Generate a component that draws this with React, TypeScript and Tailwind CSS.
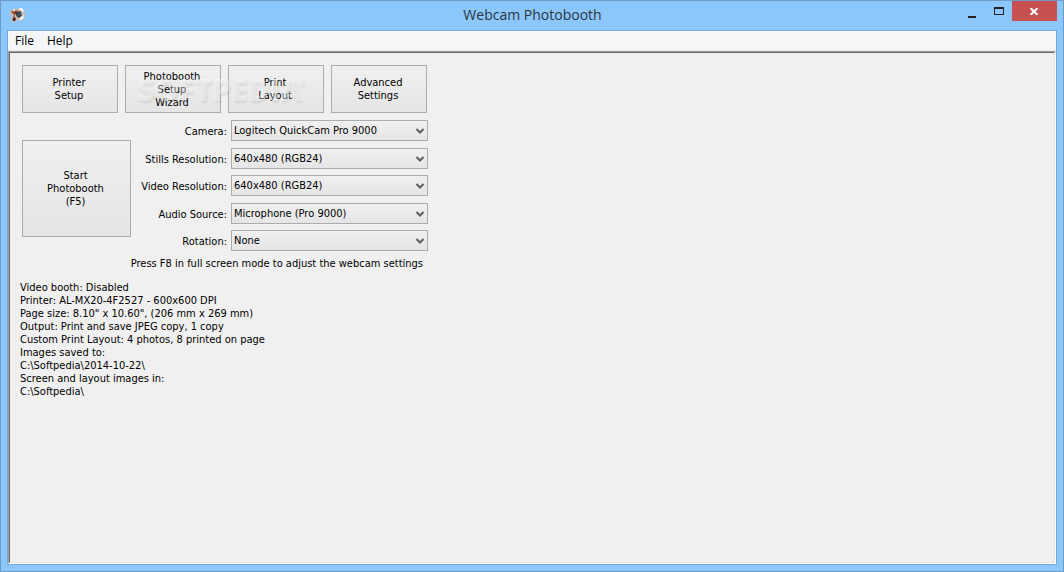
import { useState } from "react";

const TOOL_BUTTONS = [
  { id: "printer", lines: ["Printer", "Setup"] },
  { id: "wizard", lines: ["Photobooth", "Setup", "Wizard"] },
  { id: "layout", lines: ["Print", "Layout"] },
  { id: "advanced", lines: ["Advanced", "Settings"] },
];

const SETTINGS = [
  { id: "camera", label: "Camera:", options: ["Logitech QuickCam Pro 9000"] },
  { id: "stills", label: "Stills Resolution:", options: ["640x480 (RGB24)"] },
  { id: "video", label: "Video Resolution:", options: ["640x480 (RGB24)"] },
  { id: "audio", label: "Audio Source:", options: ["Microphone (Pro 9000)"] },
  { id: "rotation", label: "Rotation:", options: ["None"] },
];

const STATUS = [
  "Video booth: Disabled",
  "Printer: AL-MX20-4F2527 - 600x600 DPI",
  'Page size: 8.10" x 10.60", (206 mm x 269 mm)',
  "Output: Print and save JPEG copy, 1 copy",
  "Custom Print Layout: 4 photos, 8 printed on page",
  "Images saved to:",
  "C:\\Softpedia\\2014-10-22\\",
  "Screen and layout images in:",
  "C:\\Softpedia\\",
];

function AppIcon() {
  return (
    <svg width="16" height="16" viewBox="0 0 16 16" aria-hidden="true">
      <path d="M1 3l3-1 2-1 3 1 2-1 3 2 1 3v3l-1 3-3 2-3 0-2-1-1 2-3 1-1-2 1-3-1-2-2-1z" fill="#c4bfbd" />
      <path d="M1 4l4-1 3 1v2l-3 1v3l1 3-3 1-1-1 2-5-2-2z" fill="#a5583f" />
      <path d="M6 6l3-2 3 1v4l-3 2-3-2z" fill="#454a50" />
      <path d="M9 1h3l2 3-1 1-3-2zM12 9l2-1-1 4-4 1 0-1zM3 3l2-1v2H3z" fill="#f5f3f2" />
      <path d="M3 11h3l-1 3H3zM5 5h2v2H5z" fill="#4b2c24" />
      <path d="M11 5h1v3h-1z" fill="#8f9aa3" />
    </svg>
  );
}

function PushButton({ lines, className }: { lines: string[]; className: string }) {
  return (
    <button
      type="button"
      className={`flex flex-col items-center justify-center border border-[#acacac] bg-linear-to-b from-[#f0f0f0] to-[#e5e5e5] pr-0.5 ${className}`}
    >
      {lines.map((line) => (
        <span key={line}>{line}</span>
      ))}
    </button>
  );
}

function SettingSelect({ id, options }: { id: string; options: string[] }) {
  const [value, setValue] = useState(options[0]);

  return (
    <div className="relative">
      <select
        id={id}
        value={value}
        onChange={(e) => setValue(e.target.value)}
        className="block h-[21px] w-full appearance-none border border-[#acacac] bg-linear-to-b from-[#f0f0f0] to-[#e5e5e5] pr-5 pl-0.5"
      >
        {options.map((option) => (
          <option key={option}>{option}</option>
        ))}
      </select>
      <svg
        className="pointer-events-none absolute top-2 right-1"
        width="8"
        height="6"
        viewBox="0 0 8 6"
        aria-hidden="true"
      >
        <path d="M0.5 1l3.5 3.5L7.500 1" fill="none" stroke="#606060" strokeWidth="2" />
      </svg>
    </div>
  );
}

export default function App() {
  return (
    <div className="flex min-h-screen flex-col border border-[#6d9bc6] bg-[#8cc7fb] px-1.5 pb-1.5 font-[DejaVu_Sans_Condensed,Noto_Sans,sans-serif] text-[11px] leading-[13px] text-black">
      {/* Title bar */}
      <header className="flex h-[29px] items-start justify-between">
        <div className="flex w-[100px] px-[3px] pt-1.5">
          <AppIcon />
        </div>
        <h1 className="pt-[3px] font-[Open_Sans,sans-serif] text-[14px] leading-[22px] text-[#2b3440]">
          Webcam Photobooth
        </h1>
        <div className="flex">
          <button type="button" aria-label="Minimize" className="flex h-5 w-7 items-center justify-center pt-1">
            <svg width="8" height="10" viewBox="0 0 8 10" aria-hidden="true">
              <path d="M0 8h8v2H0z" fill="#222" />
            </svg>
          </button>
          <button type="button" aria-label="Maximize" className="flex h-5 w-[26px] items-center justify-center">
            <svg width="10" height="8" viewBox="0 0 10 8" aria-hidden="true">
              <path d="M0 0h10v8H0zM1 2v5h8V2z" fill="#222" fillRule="evenodd" />
            </svg>
          </button>
          <button type="button" aria-label="Close" className="flex h-5 w-[45px] items-center justify-center bg-[#c75050]">
            <svg width="8" height="7" viewBox="0 0 8 7" aria-hidden="true">
              <path d="M0.500 0l7 7M7.500 0l-7 7" stroke="#fff" strokeWidth="2" />
            </svg>
          </button>
        </div>
      </header>

      <div className="flex grow flex-col border border-[#76a8d5] bg-[#f0f0f0]">
        <nav className="flex h-5 border-b border-[#e8e8e8] bg-[#f5f6f7] font-[Open_Sans,sans-serif] text-[12px] leading-[19px]">
          <button type="button" className="px-[7px]">File</button>
          <button type="button" className="px-[6px]">Help</button>
        </nav>

        <main className="flex grow border-t border-r border-b border-l border-t-[#a0a0a0] border-r-white border-b-white border-l-[#a0a0a0]">
          <div className="grow border border-t-[#696969] border-r-[#e3e3e3] border-b-[#e3e3e3] border-l-[#696969] p-3">
            <div className="relative flex gap-[7px]">
              {TOOL_BUTTONS.map((button) => (
                <PushButton key={button.id} lines={button.lines} className="h-12 w-24" />
              ))}
              <span className="pointer-events-none absolute top-2 left-[115px] flex font-[Open_Sans,sans-serif] text-[30px] leading-[34px] font-extrabold text-white/40 [text-shadow:1px_2px_2px_rgb(0_0_0/0.08)]">
                SOFTPEDIA
                <sup className="top-0 -ml-1 text-[10px] leading-[18px]">®</sup>
              </span>
            </div>

            <div className="flex w-[406px] justify-between pt-[7px]">
              <PushButton lines={["Start", "Photobooth", "(F5)"]} className="mt-5 h-[97px] w-[109px]" />
              <div className="flex h-[131px] flex-col justify-between">
                {SETTINGS.map((setting) => (
                  <div key={setting.id} className="flex items-center justify-end gap-1">
                    <label htmlFor={setting.id} className="pt-0.5">
                      {setting.label}
                    </label>
                    <div className="w-[197px]">
                      <SettingSelect id={setting.id} options={setting.options} />
                    </div>
                  </div>
                ))}
              </div>
            </div>

            <p className="w-[401px] pt-[6px] text-right">
              Press F8 in full screen mode to adjust the webcam settings
            </p>

            <div className="-ml-0.5 pt-[11px]">
              {STATUS.map((line) => (
                <p key={line}>{line}</p>
              ))}
            </div>
          </div>
        </main>
      </div>
    </div>
  );
}
